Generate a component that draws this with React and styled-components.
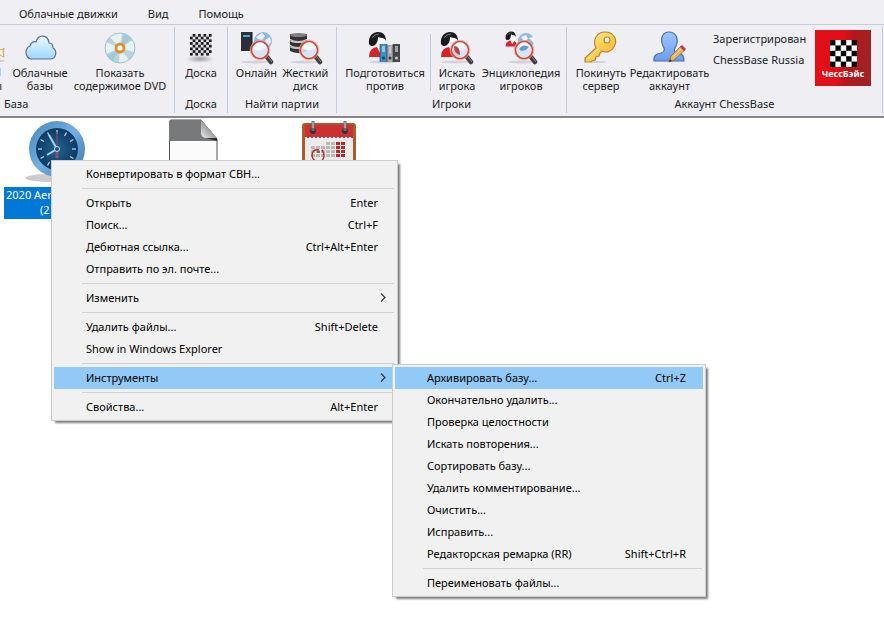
import React from "react";
import styled, { createGlobalStyle, css } from "styled-components";

const GlobalStyle = createGlobalStyle`
  * {
    box-sizing: border-box;
  }

  body {
    margin: 0;
    background: #fff;
    color: #1c1c24;
    font-family: "Noto Sans", "Open Sans", sans-serif;
    font-size: 11px;
    overflow: hidden;
  }

  button {
    font: inherit;
    color: inherit;
    border: 0;
    padding: 0;
    background: none;
    cursor: pointer;
  }
`;

const Tabs = styled.nav`
  display: flex;
  gap: 30px;
  height: 25px;
  padding: 4px 19px 0;
  background: #efeff4;
  border-bottom: 1px solid #c9cbd9;

  a {
    color: inherit;
    text-decoration: none;
    line-height: 20px;
  }
`;

const Ribbon = styled.header`
  display: flex;
  padding: 2px 1px 3px 0;
  background: #eeeef3;
  border-bottom: 2px solid #87878b;
`;

const Group = styled.section`
  display: flex;
  flex-direction: column;
  flex: ${(props) => (props.$grow ? "1" : "none")};
  height: 86px;
  padding: 0 ${(props) => props.$pad || "0"};
  border-right: 1px solid #c5c8d9;
  overflow: hidden;
`;

const Tools = styled.div`
  display: flex;
  flex: 1;
  padding-top: 3px;
`;

const GroupTitle = styled.h2`
  margin: 0;
  padding-left: ${(props) => (props.$left ? "4px" : "0")};
  font-size: 11px;
  font-weight: 400;
  line-height: 18px;
  text-align: ${(props) => (props.$left ? "left" : "center")};
`;

const ToolButton = styled.button`
  display: flex;
  flex-direction: column;
  align-items: center;
  flex: none;
  width: ${(props) => props.$width}px;
  padding-top: 1px;
  line-height: 13px;
  white-space: pre;

  svg {
    width: 34px;
    height: 34px;
    flex: none;
    margin-bottom: 1px;
  }
`;

const CutButton = styled(ToolButton)`
  align-items: flex-end;
  margin-right: 3px;

  svg {
    overflow: visible;
  }

  span {
    padding-right: 3px;
  }
`;

const ToolGap = styled.div`
  width: 6px;
`;

const ToolDivider = styled.div`
  width: 1px;
  height: 57px;
  margin: 4px 3px 0 1px;
  background: #c5c8d9;
`;

const Account = styled.div`
  display: flex;
  flex-direction: column;
  gap: 3px;
  padding-left: 3px;

  p {
    margin: 0;
    line-height: 18px;
  }
`;

const Logo = styled.div`
  display: flex;
  flex-direction: column;
  align-items: center;
  width: 56px;
  height: 56px;
  margin: 0 5px 0 auto;
  padding-top: 10px;
  background: linear-gradient(100deg, #e30f18 45%, #b5161c 60%, #98262a);
  color: #fff;
  font-size: 9px;
  font-weight: 700;
  line-height: 14px;

  svg {
    width: 27px;
    height: 27px;
    flex: none;
  }
`;

const Files = styled.main`
  display: flex;
  gap: 33px;
  padding: 0 4px;
`;

const File = styled.div`
  width: 104px;

  svg {
    display: block;
    width: 64px;
    height: 69px;
    margin: 0 auto;
  }
`;

const FileName = styled.div`
  padding: 0 2px 2px;
  background: #0078d7;
  color: #fff;
  line-height: 15px;

  span {
    display: block;
  }

  span + span {
    padding-left: 34px;
  }
`;

const menuBox = css`
  position: absolute;
  z-index: 1;
  margin: 0;
  padding: 2px;
  list-style: none;
  color: #000;
  background: #f1f1f1;
  border: 1px solid #ccc;
  box-shadow: 3px 3px 2px -1px #7d7d7d;
`;

const ContextMenu = styled.ul`
  ${menuBox}
  top: 160px;
  left: 51px;
  width: 347px;
`;

const SubMenu = styled.ul`
  ${menuBox}
  top: -3px;
  left: calc(100% - 3px);
  width: 314px;
`;

const MenuItem = styled.li`
  position: relative;
`;

const MenuButton = styled.button`
  display: flex;
  align-items: center;
  justify-content: space-between;
  width: 100%;
  height: 22px;
  padding: 0 17px 2px 32px;
  background: ${(props) => (props.$active ? "#91c9f7" : "transparent")};

  svg {
    width: 7px;
    height: 9px;
    margin-right: -9px;
  }
`;

const MenuDivider = styled.li`
  height: 1px;
  margin: 3px 1px 3px 28px;
  background: #d2d2d2;
`;

const Chess = ({ size, cell, dark, light }) => {
  const cells = [];
  for (let y = 0; y < size; y++) {
    for (let x = 0; x < size; x++) {
      if ((x + y) % 2) cells.push(<rect key={`${x}-${y}`} x={x * cell} y={y * cell} width={cell} height={cell} fill={dark} />);
    }
  }
  return (
    <g>
      <rect width={size * cell} height={size * cell} fill={light} />
      {cells}
    </g>
  );
};

const Shadow = ({ cx = 15, cy = 31 }) => (
  <ellipse cx={cx} cy={cy} rx="14" ry="1.500" fill="#73737d" opacity="0.22" />
);

const Lens = () => (
  <g>
    <path d="M25 24l3 4" stroke="#e5e5ea" strokeWidth="4" />
    <path d="M27 26l4 5" stroke="#453c3d" strokeWidth="4.500" strokeLinecap="round" />
    <path d="M28 26l4 5" stroke="#8b8587" strokeWidth="1" />
    <circle cx="20" cy="19" r="8.500" fill="#d3e5fa" fillOpacity="0.88" stroke="#c9503f" strokeWidth="2" />
    <circle cx="20" cy="19" r="9.800" fill="none" stroke="#e9a596" strokeWidth="0.8" />
    <circle cx="20" cy="19" r="7.300" fill="none" stroke="#f7e3e0" strokeWidth="0.8" />
    <path d="M14 18a6 6 0 0 1 12-1q-6 4-12 1" fill="#fff" opacity="0.7" />
  </g>
);

const Person = () => (
  <g>
    <path d="M1 26q0-9 8-10h4q7 2 7 10z" fill="#d72328" />
    <path d="M9 16l3 6 4-6z" fill="#fff" />
    <path d="M8 8q6-4 9 0c2 5-1 10-4 10s-6-4-5-10z" fill="#f7f7f9" />
    <path d="M1 13C0 5 5 1 10 1c5 0 8 3 8 9-1-2-2-3-4-3-2 0-3-1-4-1 0 4-1 6-3 8-2 2-5 1-6-1z" fill="#1b1b1e" />
    <path d="M4 7q2-4 7-4" stroke="#77777c" fill="none" />
  </g>
);

const StarIcon = () => (
  <svg viewBox="0 0 34 34">
    <ellipse cx="22" cy="30" rx="12" ry="1.500" fill="#888" opacity="0.3" />
    <path d="M26 18l5 1 2-2-1 4 1 5-4-2-4 2" fill="#fffbe0" stroke="#c9a646" />
    <path d="M28 37h2v8h-2z" fill="#9fd4f7" />
  </svg>
);

const CloudIcon = () => (
  <svg viewBox="0 0 34 34">
    <defs>
      <linearGradient id="cloud" x2="0" y2="1">
        <stop stopColor="#f0f9ff" />
        <stop offset="1" stopColor="#9bd8ff" />
      </linearGradient>
    </defs>
    <path d="M8 28a7 7 0 0 1-1-13C8 11 11 10 13 11c2-8 12-8 13 1 3 0 4 2 4 5 4 2 4 11-3 11z" fill="url(#cloud)" stroke="#626f8e" strokeWidth="1.2" />
  </svg>
);

const DiscIcon = () => (
  <svg viewBox="0 0 34 34">
    <circle cx="17" cy="17" r="15" fill="#b8d4de" />
    <path d="M17 17L7 6a15 15 0 0 1 12-4zM17 17l13-8a15 15 0 0 1 1 12zM17 17l9 12a15 15 0 0 1-10 3zM17 17L3 23a15 15 0 0 1 0-12z" fill="#e6f2f5" />
    <path d="M17 17l4-14q5 2 7 5zM17 17L4 25q2 3 6 5z" fill="#a3c8d5" />
    <circle cx="17" cy="17" r="15" fill="none" stroke="#9fc3cf" />
    <circle cx="17" cy="17" r="4" fill="#fff" stroke="#df922c" strokeWidth="3" />
  </svg>
);

const BoardIcon = () => (
  <svg viewBox="0 0 34 34">
    <defs>
      <radialGradient id="boardShadow">
        <stop stopColor="#77777f" stopOpacity="0.7" />
        <stop offset="1" stopColor="#77777f" stopOpacity="0" />
      </radialGradient>
    </defs>
    <ellipse cx="16" cy="28" rx="14" ry="4" fill="url(#boardShadow)" />
    <g transform="translate(6 3)">
      <Chess size={8} cell={2.7} dark="#18181c" light="#e6e6e8" />
    </g>
  </svg>
);

const OnlineIcon = () => (
  <svg viewBox="0 0 34 34">
    <Shadow />
    <circle cx="23" cy="10" r="9" fill="#8eb7e6" />
    <path d="M16 6l6-4 3 3-3 4-4-1zM25 9l5-3 1 5-4 5zM18 12l5 1-2 4z" fill="#eaf3fc" />
    <path d="M1 1h11v19H1z" fill="#2c3036" />
    <path d="M3 4h7v2H3z" fill="#53a4da" />
    <path d="M12 1v19" stroke="#15181c" />
    <Lens />
  </svg>
);

const DiskIcon = () => (
  <svg viewBox="0 0 34 34">
    <Shadow />
    {[15, 9, 3].map((y) => (
      <g key={y}>
        <path d={`M1 ${y}v5q8 4 17 0v-5z`} fill="#343234" />
        <ellipse cx="9.500" cy={y + 1} rx="8.500" ry="2" fill={y === 3 ? "#817f80" : "#c4c4c5"} />
      </g>
    ))}
    <Lens />
  </svg>
);

const PrepareIcon = () => (
  <svg viewBox="0 0 34 34">
    <Shadow />
    <Person />
    <path d="M12 13h7v18h-7z" fill="#3a91c5" />
    <path d="M19 14h6v17h-6z" fill="#aaa9a5" />
    <path d="M25 13h7v18h-7z" fill="#484747" />
    <path d="M14 15h3v6h-3zM21 16h2v6h-2zM27 15h3v6h-3z" fill="#dce5e9" opacity="0.6" />
    <path d="M12 13v18M19 13v18M25 13v18" stroke="#333b42" strokeWidth="0.7" />
    <circle cx="15.500" cy="27" r="1.500" fill="#16425c" />
    <circle cx="22" cy="27" r="1.500" fill="#353535" />
    <circle cx="28.500" cy="27" r="1.500" fill="#c9c9c9" />
  </svg>
);

const SearchPlayerIcon = () => (
  <svg viewBox="0 0 34 34">
    <Shadow />
    <Person />
    <Lens />
    <path d="M14 15q6 0 6 9-6-1-6-9z" fill="#bd4049" />
  </svg>
);

const EncyclopediaIcon = () => (
  <svg viewBox="0 0 34 34">
    <Shadow cx={18} />
    <circle cx="22" cy="10" r="8" fill="#92b9e5" />
    <path d="M17 6l5-2 2 4-4 2zM25 7l5-1v6z" fill="#f4f8ff" />
    <g transform="translate(1 0) scale(0.6)">
      <Person />
    </g>
    <Lens />
    <path d="M15 18q4-6 10-2l-3 3-5 1z" fill="#6698d5" />
  </svg>
);

const KeyIcon = () => (
  <svg viewBox="0 0 34 34">
    <defs>
      <linearGradient id="key" x2="1" y2="1">
        <stop stopColor="#fff3a6" />
        <stop offset="0.5" stopColor="#fcd050" />
        <stop offset="1" stopColor="#eda936" />
      </linearGradient>
    </defs>
    <ellipse cx="14" cy="31" rx="8" ry="1" fill="#888" opacity="0.3" />
    <path d="M12 17C8 9 13 1 21 1c9 0 13 8 9 15-3 5-8 6-12 4l-2 2-1 3-3 1-1 3-3 1-1 1H1v-4z" fill="url(#key)" stroke="#b78335" strokeWidth="1.2" />
    <circle cx="23" cy="9" r="3" fill="#f4f1e6" stroke="#b78335" strokeWidth="1.2" />
    <path d="M4 28l11-11" stroke="#fff3b0" />
  </svg>
);

const EditUserIcon = () => (
  <svg viewBox="0 0 34 34">
    <defs>
      <linearGradient id="user" x2="0" y2="1">
        <stop stopColor="#a0c4ff" />
        <stop offset="1" stopColor="#6c9eee" />
      </linearGradient>
    </defs>
    <path d="M1 30q-1-7 7-8c4-1 4-4 2-7C7 8 9 1 16 1s10 7 7 14c-3 5-2 6 3 7 4 1 5 4 5 8z" fill="url(#user)" stroke="#416fb1" strokeWidth="1.2" />
    <path d="M16 31l2-6 10-10 4 4-11 10z" fill="#efb363" stroke="#966331" strokeWidth="0.8" />
    <path d="M27 16l2-2 4 4-2 2z" fill="#c93649" />
    <path d="M16 31l1-3 2 2z" fill="#333" />
    <path d="M20 26l8-8" stroke="#ffe3a3" />
  </svg>
);

const ClockIcon = () => (
  <svg viewBox="0 0 64 69">
    <defs>
      <linearGradient id="rim" x2="1" y2="1">
        <stop stopColor="#4787bb" />
        <stop offset="0.5" stopColor="#73afe0" />
        <stop offset="1" stopColor="#3573a8" />
      </linearGradient>
      <radialGradient id="face">
        <stop stopColor="#23638f" />
        <stop offset="1" stopColor="#0a3a64" />
      </radialGradient>
    </defs>
    <ellipse cx="28" cy="60" rx="27" ry="4" fill="#ccc" />
    <circle cx="33" cy="31" r="28" fill="url(#rim)" />
    <circle cx="33" cy="31" r="21" fill="url(#face)" />
    {[...Array(12)].map((_, i) => (
      <path key={i} d="M33 12v4" stroke="#b5d3e8" strokeWidth="1.300" transform={`rotate(${i * 30} 33 31)`} />
    ))}
    <path d="M33 14v17" stroke="#6b4a70" strokeWidth="1.500" />
    <path d="M33 31v9" stroke="#914b6f" strokeWidth="3" />
    <path d="M33 31l-8-14M33 31l-10 6" stroke="#a5d3f0" strokeWidth="2" />
    <circle cx="33" cy="31" r="2.500" fill="#264f70" stroke="#b8dced" />
  </svg>
);

const PageIcon = () => (
  <svg viewBox="0 0 64 69">
    <defs>
      <linearGradient id="fold" x1="1" x2="0" y1="0" y2="1">
        <stop offset="0.400" stopColor="#8d8d8d" />
        <stop offset="1" stopColor="#eee" />
      </linearGradient>
    </defs>
    <path d="M8.500 66V4q0-2 2-2H40l16 19v45z" fill="#fbfbfb" stroke="#505254" />
    <path d="M8 23V4q0-2 2-2h30l16 21z" fill="#77797b" />
    <path d="M40 2l16 18H44q-4-1-4-5z" fill="url(#fold)" />
    <path d="M45 20h11v3z" fill="#303030" />
  </svg>
);

const CalendarIcon = () => (
  <svg viewBox="1 0 64 69">
    <rect x="5" y="5" width="54" height="60" rx="3" fill="#a85c2b" />
    <path d="M8 7h48v13H8z" fill="#cd3032" />
    <path d="M8 20h48v46H8z" fill="#ecebea" />
    <path d="M8 20h48" stroke="#fff" strokeWidth="2" strokeDasharray="2 2" />
    {[0, 1, 2, 3].map((r) =>
      [0, 1, 2, 3, 4, 5, 6].map((c) =>
        r === 0 && c < 3 ? null : (
          <rect key={`${r}-${c}`} x={14 + c * 5} y={24 + r * 4} width="4" height="3" fill={c > 4 ? "#bb272d" : "#b9b9b8"} />
        )
      )
    )}
    <path d="M22 32c-5-1-7 2-7 5s2 6 5 6M25 32c3 4 3 7 0 11M20 34h3" stroke="#bd2730" strokeWidth="1.500" fill="none" />
    {[16, 48].map((x) => (
      <g key={x}>
        <circle cx={x} cy="13" r="3" fill="#333" />
        <path d={`M${x} 3v10`} stroke="#666a6e" strokeWidth="3" />
        <path d={`M${x} 4v6`} stroke="#d8dadb" />
      </g>
    ))}
  </svg>
);

const Arrow = () => (
  <svg viewBox="0 0 7 9">
    <path d="M1 0.500l4 4-4 4" fill="none" stroke="#333" strokeWidth="1.200" />
  </svg>
);

const toolsMenu = [
  { label: "Архивировать базу...", keys: "Ctrl+Z", active: true },
  { label: "Окончательно удалить..." },
  { label: "Проверка целостности" },
  { label: "Искать повторения..." },
  { label: "Сортировать базу..." },
  { label: "Удалить комментирование..." },
  { label: "Очистить..." },
  { label: "Исправить..." },
  { label: "Редакторская ремарка (RR)", keys: "Shift+Ctrl+R" },
  null,
  { label: "Переименовать файлы..." },
];

const fileMenu = [
  { label: "Конвертировать в формат CBH..." },
  null,
  { label: "Открыть", keys: "Enter" },
  { label: "Поиск...", keys: "Ctrl+F" },
  { label: "Дебютная ссылка...", keys: "Ctrl+Alt+Enter" },
  { label: "Отправить по эл. почте..." },
  null,
  { label: "Изменить", arrow: true },
  null,
  { label: "Удалить файлы...", keys: "Shift+Delete" },
  { label: "Show in Windows Explorer" },
  null,
  { label: "Инструменты", arrow: true, active: true, items: toolsMenu },
  null,
  { label: "Свойства...", keys: "Alt+Enter" },
];

function MenuItems({ items }) {
  return items.map((item, i) =>
    item ? (
      <MenuItem key={i}>
        <MenuButton $active={item.active}>
          <span>{item.label}</span>
          {item.keys && <span>{item.keys}</span>}
          {item.arrow && <Arrow />}
        </MenuButton>
        {item.items && (
          <SubMenu>
            <MenuItems items={item.items} />
          </SubMenu>
        )}
      </MenuItem>
    ) : (
      <MenuDivider key={i} role="separator" />
    )
  );
}

function Tool({ icon, label, width }) {
  return (
    <ToolButton $width={width}>
      {icon}
      {label}
    </ToolButton>
  );
}

function App() {
  return (
    <>
      <GlobalStyle />
      <Tabs>
        <a href="#engines">Облачные движки</a>
        <a href="#view">Вид</a>
        <a href="#help">Помощь</a>
      </Tabs>
      <Ribbon>
        <Group>
          <Tools>
            <CutButton $width={5}>
              <StarIcon />
              <span>{" \nы"}</span>
            </CutButton>
            <Tool icon={<CloudIcon />} label={"Облачные\nбазы"} width={64} />
            <Tool icon={<DiscIcon />} label={"Показать\nсодержимое DVD"} width={96} />
            <ToolGap />
          </Tools>
          <GroupTitle $left>База</GroupTitle>
        </Group>
        <Group>
          <Tools>
            <Tool icon={<BoardIcon />} label="Доска" width={52} />
          </Tools>
          <GroupTitle>Доска</GroupTitle>
        </Group>
        <Group $pad="5px">
          <Tools>
            <Tool icon={<OnlineIcon />} label="Онлайн" width={47} />
            <Tool icon={<DiskIcon />} label={"Жесткий\nдиск"} width={51} />
          </Tools>
          <GroupTitle>Найти партии</GroupTitle>
        </Group>
        <Group $pad="4px">
          <Tools>
            <Tool icon={<PrepareIcon />} label={"Подготовиться\nпротив"} width={88} />
            <ToolDivider />
            <Tool icon={<SearchPlayerIcon />} label={"Искать\nигрока"} width={46} />
            <Tool icon={<EncyclopediaIcon />} label={"Энциклопедия\nигроков"} width={82} />
          </Tools>
          <GroupTitle>Игроки</GroupTitle>
        </Group>
        <Group $grow $pad="6px">
          <Tools>
            <Tool icon={<KeyIcon />} label={"Покинуть\nсервер"} width={56} />
            <Tool icon={<EditUserIcon />} label={"Редактировать\nаккаунт"} width={81} />
            <Account>
              <p>Зарегистрирован</p>
              <p>ChessBase Russia</p>
            </Account>
            <Logo>
              <svg viewBox="0 0 25 25">
                <Chess size={5} cell={5} dark="#fff" light="#050505" />
              </svg>
              ЧессБэйс
            </Logo>
          </Tools>
          <GroupTitle>Аккаунт ChessBase</GroupTitle>
        </Group>
      </Ribbon>
      <Files>
        <File>
          <ClockIcon />
          <FileName>
            <span>2020 Aer</span>
            <span>(2</span>
          </FileName>
        </File>
        <File>
          <PageIcon />
        </File>
        <File>
          <CalendarIcon />
        </File>
      </Files>
      <ContextMenu>
        <MenuItems items={fileMenu} />
      </ContextMenu>
    </>
  );
}

export default App;
